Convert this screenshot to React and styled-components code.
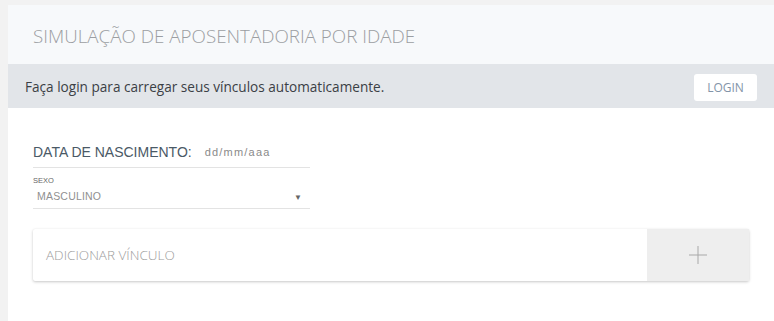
import React from "react";
import styled, { createGlobalStyle } from "styled-components";

const Global = createGlobalStyle`
  html, body { margin: 0; padding: 0; background: #f2f2f2; }
  body { font-family: "Open Sans", "Liberation Sans", sans-serif; }
  * { box-sizing: border-box; }
`;

const Page = styled.div`
  padding: 5px 0 0 8px;
  min-height: 321px;
  display: flex;
`;

const Card = styled.div`
  flex: 1;
  background: #ffffff;
  min-height: 316px;
  display: flex;
  flex-direction: column;
`;

const Header = styled.div`
  height: 59px;
  background: #f7f9fb;
  display: flex;
  align-items: center;
  padding: 3px 25px 0;
`;

const Title = styled.h1`
  margin: 0;
  font-size: 18.8px;
  font-weight: 300;
  color: #9b9ea2;
`;

const LoginBar = styled.div`
  height: 44px;
  background: #e2e5e9;
  display: flex;
  align-items: center;
  justify-content: space-between;
  padding: 0 17px;
`;

const LoginText = styled.span`
  font-size: 13.6px;
  color: #3b4045;
`;

const LoginButton = styled.button`
  width: 63px;
  height: 27px;
  border: none;
  border-radius: 3px;
  background: #ffffff;
  color: #8394a8;
  font-family: "Open Sans", "Liberation Sans", sans-serif;
  font-size: 12px;
  font-weight: 400;
  padding: 0;
  margin-top: 2px;
`;

const Body = styled.div`
  padding: 36px 25px 0;
  display: flex;
  flex-direction: column;
`;

const Field = styled.div`
  width: 277px;
  border-bottom: 1px solid #e3e3e3;
  display: flex;
  align-items: ${(p) => (p.$stack ? "stretch" : "center")};
  flex-direction: ${(p) => (p.$stack ? "column" : "row")};
  padding-bottom: ${(p) => (p.$stack ? "6px" : "7px")};
  margin-bottom: ${(p) => p.$mb || "0"};
`;

const DateLabel = styled.span`
  font-family: "Liberation Sans", Arial, sans-serif;
  font-size: 14px;
  color: #4a5966;
  margin-right: 13px;
`;

const DatePlaceholder = styled.span`
  font-family: "Liberation Sans", Arial, sans-serif;
  font-size: 11px;
  color: #8a8a8a;
  letter-spacing: 1.2px;
`;

const SmallLabel = styled.span`
  font-family: "Liberation Sans", Arial, sans-serif;
  font-size: 7.5px;
  color: #666;
  line-height: 9px;
`;

const SelectRow = styled.div`
  display: flex;
  justify-content: space-between;
  align-items: center;
  padding: 5px 8px 0 4px;
`;

const SelectValue = styled.span`
  font-family: "Liberation Sans", Arial, sans-serif;
  font-size: 10.5px;
  color: #909090;
  letter-spacing: 0.2px;
`;

const Caret = styled.span`
  font-size: 8px;
  color: #666;
`;

const AddCard = styled.div`
  margin-top: 20px;
  height: 52px;
  display: flex;
  background: #ffffff;
  box-shadow: 0 1px 3px rgba(0, 0, 0, 0.22), 0 0 1px rgba(0, 0, 0, 0.06);
  border-radius: 2px;
`;

const AddLabel = styled.div`
  flex: 1;
  display: flex;
  align-items: center;
  padding-left: 13px;
  font-size: 13.5px;
  font-weight: 300;
  color: #9c9c9c;
`;

const PlusButton = styled.div`
  width: 102px;
  background: #eeeeee;
  display: flex;
  align-items: center;
  justify-content: center;
`;

export default function App() {
  return (
    <>
      <Global />
      <Page>
        <Card>
          <Header>
            <Title>SIMULAÇÃO DE APOSENTADORIA POR IDADE</Title>
          </Header>
          <LoginBar>
            <LoginText>Faça login para carregar seus vínculos automaticamente.</LoginText>
            <LoginButton>LOGIN</LoginButton>
          </LoginBar>
          <Body>
            <Field $mb="8px">
              <DateLabel>DATA DE NASCIMENTO:</DateLabel>
              <DatePlaceholder>dd/mm/aaa</DatePlaceholder>
            </Field>
            <Field $stack>
              <SmallLabel>SEXO</SmallLabel>
              <SelectRow>
                <SelectValue>MASCULINO</SelectValue>
                <Caret>▼</Caret>
              </SelectRow>
            </Field>
            <AddCard>
              <AddLabel>ADICIONAR VÍNCULO</AddLabel>
              <PlusButton>
                <svg width="20" height="20" viewBox="0 0 20 20">
                  <path d="M10 1v18M1 10h18" stroke="#a8a8a8" strokeWidth="1" fill="none" />
                </svg>
              </PlusButton>
            </AddCard>
          </Body>
        </Card>
      </Page>
    </>
  );
}
